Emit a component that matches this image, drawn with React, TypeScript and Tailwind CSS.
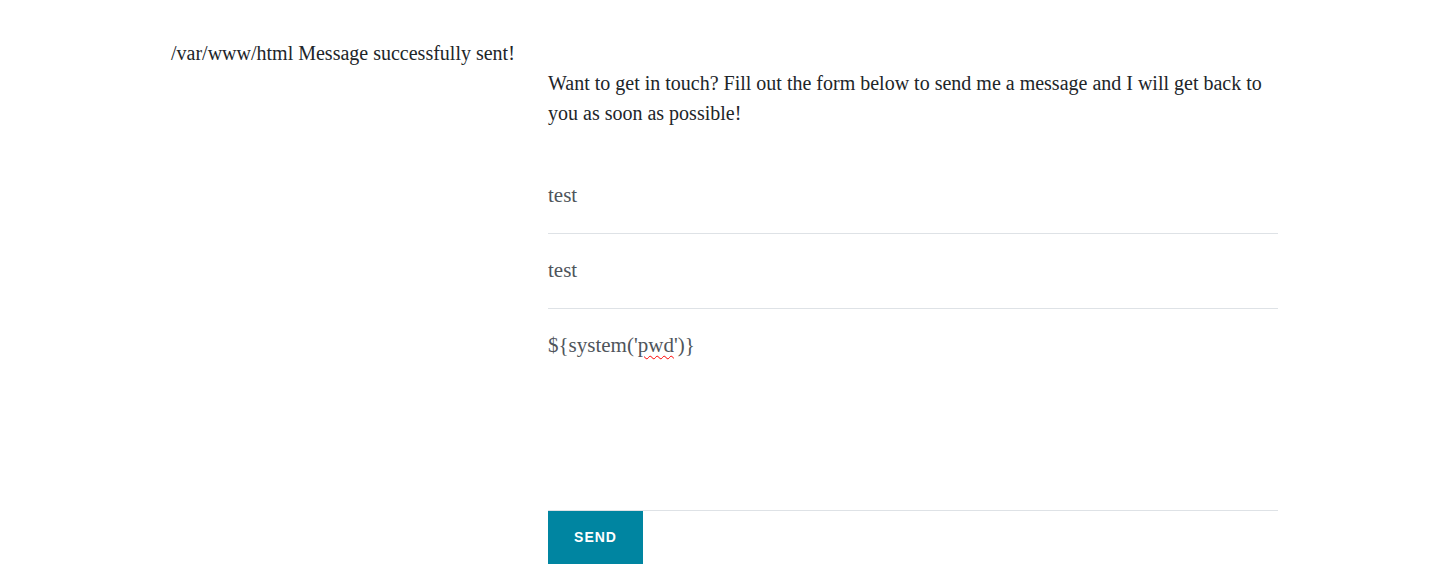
import React from 'react'

const serif = "font-['Liberation_Serif',serif]"

const Field: React.FC<{ children: React.ReactNode; tall?: boolean }> = ({ children, tall }) => (
  <div className={`border-b border-[#dee2e6] ${tall ? 'h-[202px]' : 'h-[75px]'} pt-[22px]`}>
    <div className={`${serif} text-[21px] leading-[28px] text-[#4f555b]`}>{children}</div>
  </div>
)

export default function App() {
  return (
    <div className="min-h-[574px] bg-white">
      <div className="flex pl-[171px] pt-[38px]">
        <div className={`${serif} w-[377px] text-[20px] leading-[30px] text-[#212529]`}>
          /var/www/html Message successfully sent!
        </div>
        <div className="w-[730px] pt-[30px]">
          <p className={`${serif} text-[20px] leading-[30px] text-[#212529]`}>
            Want to get in touch? Fill out the form below to send me a message and I will get back to you as soon as possible!
          </p>
          <div className="mt-[31px]">
            <Field>test</Field>
            <Field>test</Field>
            <Field tall>
              ${'{'}system('
              <span className="underline decoration-wavy decoration-[#f00] decoration-1 underline-offset-[3px]">pwd</span>
              '){'}'}
            </Field>
          </div>
          <button className="h-[53px] w-[95px] bg-[#0085a1] font-['Liberation_Sans',Arial,sans-serif] text-[14px] font-bold uppercase tracking-[1px] text-white">
            Send
          </button>
        </div>
      </div>
    </div>
  )
}
